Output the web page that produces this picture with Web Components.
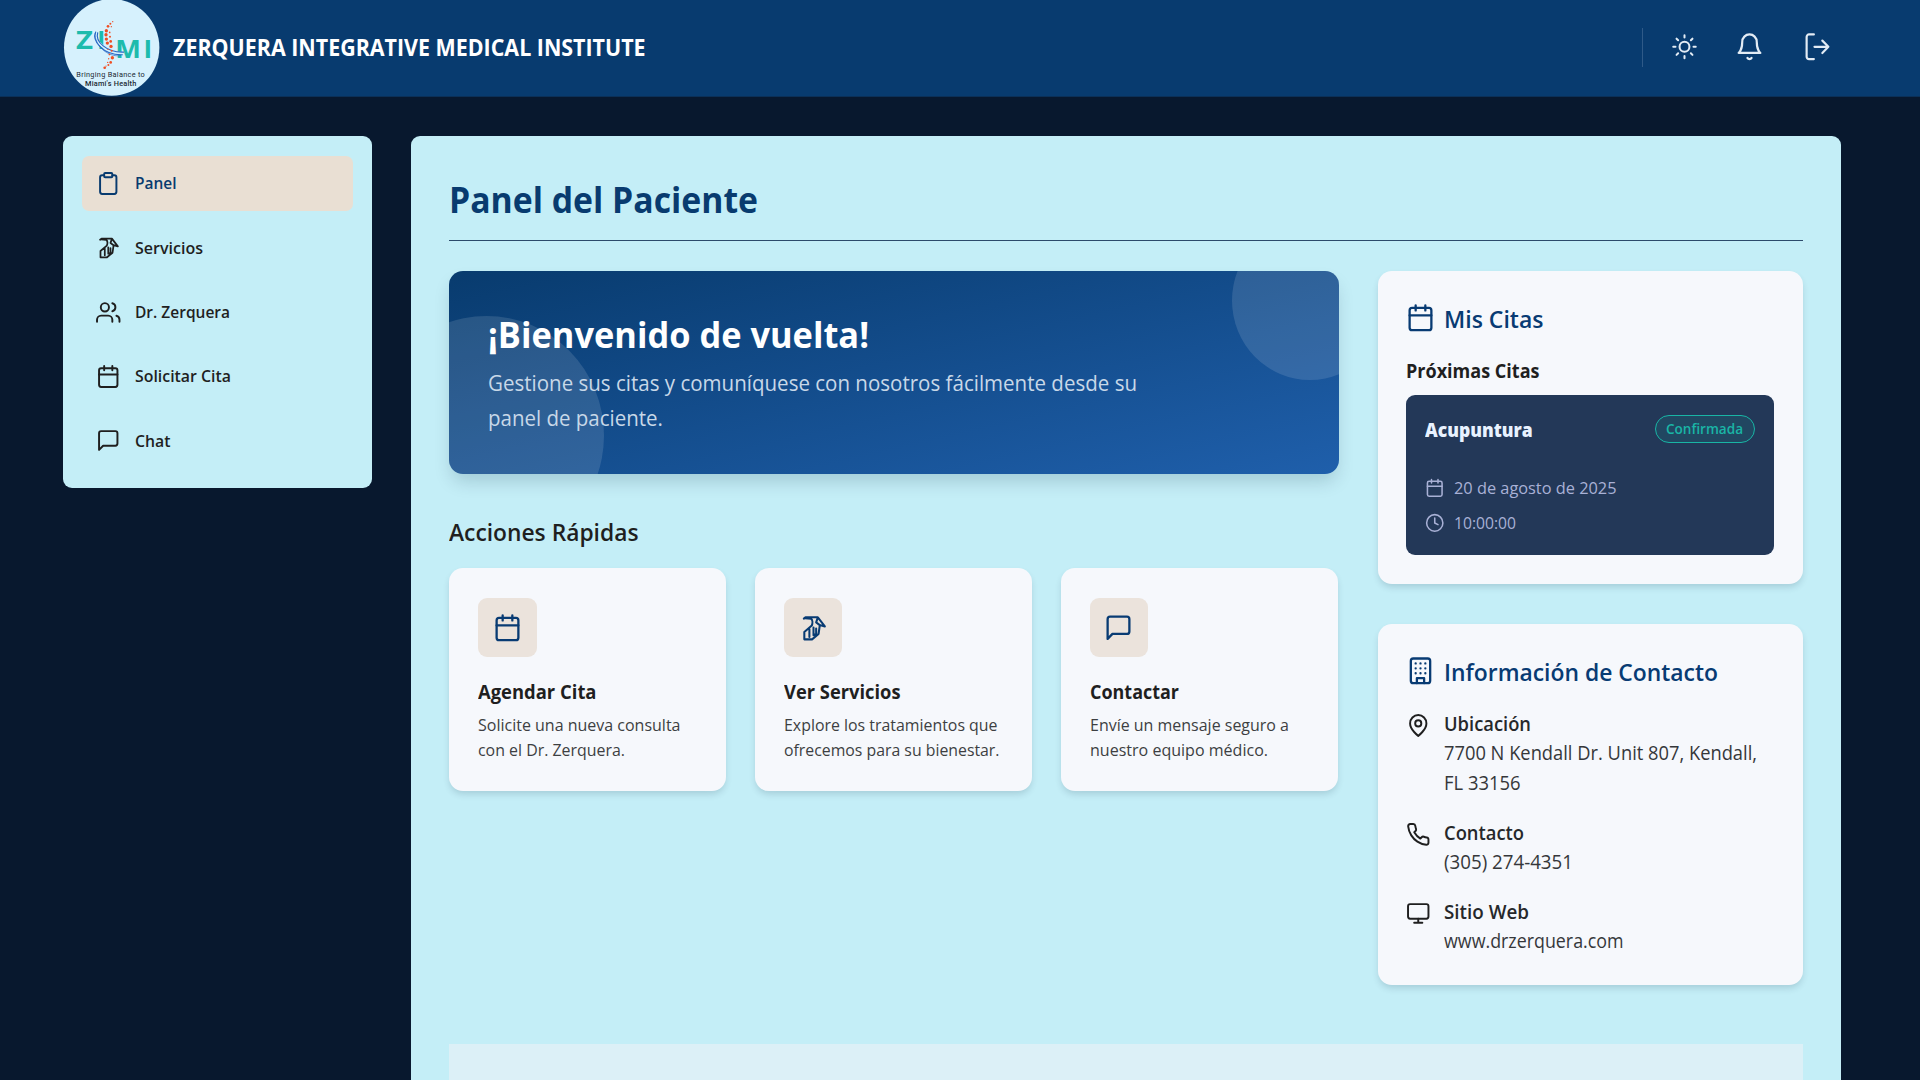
<!DOCTYPE html>
<html lang="es">
<head>
<meta charset="utf-8">
<title>Zerquera Integrative Medical Institute</title>
<style>
html,body{margin:0;height:100%;overflow:hidden;background:#08182e}
body{font-family:"Open Sans","Noto Sans",sans-serif;color:#1f1f1f}
</style>
</head>
<body>
<zimi-app></zimi-app>
<script>
const ICONS = {
  sun:'<circle cx="12" cy="12" r="4.4"/><path d="M12 2v2M12 20v2M4.93 4.93l1.41 1.41M17.66 17.66l1.41 1.41M2 12h2M20 12h2M6.34 17.66l-1.41 1.41M19.07 4.93l-1.41 1.41"/>',
  bell:'<path d="M18 8A6 6 0 0 0 6 8c0 7-3 9-3 9h18s-3-2-3-9M13.73 21a2 2 0 0 1-3.46 0"/>',
  logout:'<path d="M9 22H5a2 2 0 0 1-2-2V4a2 2 0 0 1 2-2h4M16 17l5-5-5-5M21 12H9.5"/>',
  clipboard:'<path d="M16 4h2a2 2 0 0 1 2 2v14a2 2 0 0 1-2 2H6a2 2 0 0 1-2-2V6a2 2 0 0 1 2-2h2"/><rect x="8" y="2" width="8" height="4" rx="1"/>',
  care:'<path stroke-width="1.7" d="M4 4.6L5.4 3.5H15.6L21.4 10.9L17.2 9.8M5 4.2l5 .4c1.2 1 1.4 3.6.6 5.6L4.4 15.4V21.4h6.4l5.4-4.4 1-7M8.6 13v6.4M12 11.8v6.2l2.2-1V12.6M15.4 4.2l-1.2 3.4 3 2.2"/>',
  users:'<path d="M16 21v-2a4 4 0 0 0-4-4H5a4 4 0 0 0-4 4v2"/><circle cx="8.7" cy="7" r="4"/><path d="M23 21v-2a4 4 0 0 0-3-3.87M16 3.13a4 4 0 0 1 0 7.75"/>',
  calendar:'<rect x="3" y="4" width="18" height="18" rx="2"/><path d="M16 2v4M8 2v4M3 10h18"/>',
  message:'<path d="M21 15a2 2 0 0 1-2 2H7l-4 4V5a2 2 0 0 1 2-2h14a2 2 0 0 1 2 2z"/>',
  clock:'<circle cx="12" cy="12" r="10"/><path d="M12 6v6l4 2"/>',
  building:'<rect x="4" y="2" width="16" height="20" rx="2"/><path d="M9 22v-4h6v4M8 6h.01M12 6h.01M16 6h.01M8 10h.01M12 10h.01M16 10h.01M8 14h.01M12 14h.01M16 14h.01"/>',
  pin:'<path d="M20 10c0 6-8 12-8 12s-8-6-8-12a8 8 0 0 1 16 0Z"/><circle cx="12" cy="10" r="3"/>',
  phone:'<path d="M22 16.92v3a2 2 0 0 1-2.18 2 19.79 19.79 0 0 1-8.63-3.07 19.5 19.5 0 0 1-6-6 19.79 19.79 0 0 1-3.07-8.67A2 2 0 0 1 4.11 2h3a2 2 0 0 1 2 1.72c.127.96.361 1.903.7 2.81a2 2 0 0 1-.45 2.11L8.09 9.91a16 16 0 0 0 6 6l1.27-1.27a2 2 0 0 1 2.11-.45c.907.339 1.85.573 2.81.7A2 2 0 0 1 22 16.92z"/>',
  monitor:'<rect x="2" y="3" width="20" height="14" rx="2"/><path d="M8 21h8M12 17v4"/>'
};
class Base extends HTMLElement {
  connectedCallback(){
    if (this.shadowRoot) return;
    this.attachShadow({mode:'open'}).innerHTML = this.view();
    this.ready && this.ready();
  }
  a(n, d=''){ return this.getAttribute(n) ?? d; }
}
/* one line of text, condensed or widened to the given width */
customElements.define('fit-text', class extends Base {
  view(){ return `<style>:host{display:block;width:${this.a('w')}px;white-space:nowrap}
    span{display:inline-block;transform-origin:0 50%}</style><span>${this.a('text')}</span>`; }
  ready(){
    const s = this.shadowRoot.querySelector('span');
    const n = s.offsetWidth && s.getBoundingClientRect().width;
    if (n) s.style.transform = `scaleX(${+this.a('w') / n})`;
  }
});
customElements.define('ui-icon', class extends Base {
  view(){ const s = +this.a('size','24.5');
    return `<style>:host{display:block;flex:none;width:${s}px;height:${s*1.02}px}svg{display:block;width:100%;height:100%;overflow:visible}</style>
    <svg viewBox="0 0 24 24" preserveAspectRatio="none" fill="none" stroke="currentColor" stroke-width="${this.a('stroke','1.9')}" stroke-linecap="round" stroke-linejoin="round">${ICONS[this.a('name')]}</svg>`; }
});
customElements.define('zimi-logo', class extends Base {
  view(){
    const dots = [[157,65,2],[150,71,3],[143,79,4],[153,80,2],[138,92,5],[148,97,2.5],[137,104,5],[149,110,3],[138,117,5],[151,124,4],[141,129,5],[152,139,5],[143,148,2],[154,152,3],[147,163,2.5],[156,173,5],[145,176,2],[151,187,4],[142,187,2],[144,195,3],[137,198,2],[133,203,4]]
      .map(([x,y,r]) => `<circle cx="${x}" cy="${y}" r="${r}"/>`).join('');
    return `<style>:host{display:block;flex:none;width:95.4px;height:96.8px;margin-top:-1px}svg{display:block;width:100%;height:100%;overflow:visible}</style>
    <svg viewBox="11 -3 286 290" preserveAspectRatio="none">
      <ellipse cx="154" cy="142" rx="143" ry="145" fill="#d6f1fd"/>
      <g fill="#1dbbac" font-family="Open Sans" font-weight="700">
        <text x="47" y="147" font-size="77" textLength="51" lengthAdjust="spacingAndGlyphs">Z</text>
        <text x="111" y="147" font-size="77" textLength="24" lengthAdjust="spacingAndGlyphs">I</text>
        <text x="165" y="174" font-size="77" textLength="77" lengthAdjust="spacingAndGlyphs">M</text>
        <text x="249" y="174" font-size="77" textLength="26" lengthAdjust="spacingAndGlyphs">I</text>
      </g>
      <path fill="none" stroke="#d6f1fd" stroke-width="8" d="M108 98C102 122 134 160 188 160"/>
      <g fill="none" stroke="#2867c4" stroke-width="3.4" stroke-linecap="round">
        <path d="M106 96C94 122 128 166 186 164"/><path d="M112 98C104 124 138 158 190 156"/><path d="M104 100C102 136 142 172 180 167" stroke-width="2"/>
      </g>
      <g fill="#f04e23">${dots}</g>
      <g fill="#222a33" font-family="Roboto" font-size="22">
        <text x="48" y="232" textLength="205" lengthAdjust="spacing">Bringing Balance to</text>
        <text x="74" y="257" font-weight="500" textLength="154" lengthAdjust="spacing">Miami's Health</text>
      </g>
    </svg>`; }
});
customElements.define('app-header', class extends Base {
  view(){ return `<style>
    :host{display:flex;align-items:center;box-sizing:border-box;height:97px;padding:0 88.2px 0 63.5px;background:#083b6f;border-bottom:1px solid #0b3058;color:#fff}
    .t{margin-left:14.1px;font-size:22.6px;font-weight:700;line-height:32px}
    nav{margin-left:auto;display:flex;align-items:center;color:#e3ecf5;margin-top:-2px}
    i{width:1px;height:39px;background:#2f5a88;margin-right:28px}
    .b{margin-left:37.6px}.c{margin-left:38.5px}
    </style><zimi-logo></zimi-logo><fit-text class="t" w="472.6" text="ZERQUERA INTEGRATIVE MEDICAL INSTITUTE"></fit-text>
    <nav><i></i><ui-icon name="sun" size="27" stroke="1.8"></ui-icon><ui-icon class="b" name="bell" size="29" stroke="1.8"></ui-icon><ui-icon class="c" name="logout" size="29" stroke="1.8"></ui-icon></nav>`; }
});
customElements.define('nav-item', class extends Base {
  view(){ return `<style>
    :host{display:flex;align-items:center;height:54.4px;padding-left:14px;border-radius:7px;gap:14px;font-size:17px;font-weight:600;line-height:26px}
    :host([active]){background:#e9dfd3;color:#083b6f}
    </style><ui-icon name="${this.a('icon')}"></ui-icon><fit-text w="${this.a('w')}" text="${this.a('label')}"></fit-text>`; }
});
customElements.define('side-nav', class extends Base {
  view(){ return `<style>
    :host{display:flex;flex-direction:column;gap:9.9px;flex:none;box-sizing:border-box;width:309.4px;height:352px;padding:20px 19.4px;background:#c4eef7;border-radius:9px}
    </style><slot></slot>`; }
});
customElements.define('welcome-banner', class extends Base {
  view(){ return `<style>
    :host{display:block;position:relative;overflow:hidden;box-sizing:border-box;height:203px;padding:40px 38.2px 0;border-radius:14px;background:linear-gradient(to bottom right,#083b6e,#1f5fab);color:#fff}
    .o{position:absolute;width:235px;height:239px;left:-80px;bottom:-81px;border-radius:50%;background:rgba(255,255,255,.12)}
    .p{width:156px;height:159px;left:auto;bottom:auto;right:-49px;top:-50px}
    .c{position:relative}
    .h{font-size:35.6px;font-weight:700;line-height:46px;margin-bottom:8px}
    .d{font-size:22px;line-height:34.8px;color:#c8d8e8}
    </style><div class="o"></div><div class="o p"></div>
    <div class="c"><fit-text class="h" w="381" text="¡Bienvenido de vuelta!"></fit-text>
    <fit-text class="d" w="649" text="Gestione sus citas y comuníquese con nosotros fácilmente desde su"></fit-text>
    <fit-text class="d" w="175" text="panel de paciente."></fit-text></div>`; }
});
customElements.define('action-card', class extends Base {
  view(){ return `<style>
    :host{display:block;box-sizing:border-box;flex:1;height:222.5px;padding:29.5px 0 0 29px;border-radius:14px;background:#f6f8fc;box-shadow:0 4px 7px -1px rgba(0,40,60,.16)}
    .i{display:flex;align-items:center;justify-content:center;width:58.3px;height:59.7px;border-radius:9px;background:#ebe3dc;color:#083b73}
    .t{font-size:19.3px;font-weight:700;line-height:30px;margin:20px 0 4.6px}
    .d{font-size:17px;line-height:25px;color:#3d3f42}
    </style><div class="i"><ui-icon name="${this.a('icon')}" size="29"></ui-icon></div>
    <fit-text class="t" w="${this.a('w')}" text="${this.a('label')}"></fit-text>
    <fit-text class="d" w="${this.a('w1')}" text="${this.a('l1')}"></fit-text>
    <fit-text class="d" w="${this.a('w2')}" text="${this.a('l2')}"></fit-text>`; }
});
customElements.define('info-card', class extends Base {
  view(){ return `<style>
    :host{display:block;box-sizing:border-box;padding:30px 29px 29px 28.6px;border-radius:14px;background:#f6f8fc;box-shadow:0 4px 7px -1px rgba(0,40,60,.16)}
    .h{display:flex;align-items:center;gap:9px;color:#083b73;font-size:24.2px;font-weight:600;line-height:36px;height:36px}
    ui-icon{margin-top:-1.6px}
    </style><div class="h"><ui-icon name="${this.a('icon')}" size="29" stroke="1.9"></ui-icon><fit-text w="${this.a('w')}" text="${this.a('label')}"></fit-text></div><slot></slot>`; }
});
customElements.define('appointment-item', class extends Base {
  view(){ return `<style>
    :host{display:block;box-sizing:border-box;height:160px;padding:20px 18.8px;border-radius:9px;background:#233858;color:#a9b1d6}
    .r{display:flex;justify-content:space-between;align-items:flex-start;margin-bottom:30.4px;height:30px}
    .n{font-size:19.3px;font-weight:800;line-height:30px;color:#e8f2ff}
    .b{box-sizing:border-box;height:27.5px;width:100px;padding-left:10px;border:1px solid #19b5a5;border-radius:14px;background:rgba(25,181,165,.13);color:#1ab5a6;font-size:14.4px;font-weight:600;line-height:26.4px}
    .m{display:flex;align-items:center;gap:9px;height:25px;line-height:25px;font-size:17px;margin-bottom:9.5px}
    </style><div class="r"><fit-text class="n" w="107.6" text="Acupuntura"></fit-text><div class="b"><fit-text w="77" text="Confirmada"></fit-text></div></div>
    <div class="m"><ui-icon name="calendar" size="19.5" stroke="1.9"></ui-icon><fit-text w="162.5" text="20 de agosto de 2025"></fit-text></div>
    <div class="m"><ui-icon name="clock" size="19.5" stroke="1.9"></ui-icon><fit-text w="62" text="10:00:00"></fit-text></div>`; }
});
customElements.define('contact-row', class extends Base {
  view(){ return `<style>
    :host{display:flex;gap:13.6px;font-size:19.3px;line-height:29.8px;color:#35373a}
    ui-icon{margin-top:4.4px;color:#1f1f1f}
    .t{font-weight:600;color:#26282b}
    </style><ui-icon name="${this.a('icon')}"></ui-icon><div><fit-text class="t" w="${this.a('w')}" text="${this.a('label')}"></fit-text><slot></slot></div>`; }
});
customElements.define('zimi-app', class extends Base {
  view(){ return `<style>
    :host{display:block;height:1080px;overflow:hidden;background:#08182e}
    .page{display:flex;gap:38.4px;padding:39.3px 78.6px 0 62.8px;align-items:flex-start}
    main{flex:1;box-sizing:border-box;height:1000px;background:#c4eef7;border-radius:9px;padding:40.4px 38.7px 0 38.8px}
    .h{font-size:36px;font-weight:700;line-height:46px;color:#083b6f}
    .head{padding-bottom:17.6px;border-bottom:1px solid #2c4a6b;margin-bottom:29.8px}
    .grid{display:flex;gap:39px}
    .l{width:889.4px}.r{flex:1;display:flex;flex-direction:column;gap:40px}
    .shade{border-radius:14px;box-shadow:0 10px 18px -3px rgba(0,40,60,.18)}
    .q{font-size:24.2px;font-weight:600;line-height:36px;margin:39.9px 0 18.3px}
    .cards{display:flex;gap:28.8px;padding-right:1px}
    .s{font-size:19.3px;font-weight:700;line-height:30px;margin:18.5px 0 9.5px}
    .first{margin-top:18.6px}.row{margin-top:19.5px}
    .foot{margin-top:59.2px;height:100px;background:#dcf0f7}
    </style>
    <app-header></app-header>
    <div class="page">
      <side-nav>
        <nav-item active icon="clipboard" label="Panel" w="41.5"></nav-item>
        <nav-item icon="care" label="Servicios" w="68"></nav-item>
        <nav-item icon="users" label="Dr. Zerquera" w="95"></nav-item>
        <nav-item icon="calendar" label="Solicitar Cita" w="96"></nav-item>
        <nav-item icon="message" label="Chat" w="35.5"></nav-item>
      </side-nav>
      <main>
        <div class="head"><fit-text class="h" w="309" text="Panel del Paciente"></fit-text></div>
        <div class="grid">
          <div class="l">
            <welcome-banner class="shade"></welcome-banner>
            <fit-text class="q" w="189.5" text="Acciones Rápidas"></fit-text>
            <div class="cards">
              <action-card icon="calendar" label="Agendar Cita" w="118.5" l1="Solicite una nueva consulta" w1="202.5" l2="con el Dr. Zerquera." w2="147"></action-card>
              <action-card icon="care" label="Ver Servicios" w="116.5" l1="Explore los tratamientos que" w1="213.5" l2="ofrecemos para su bienestar." w2="215.5"></action-card>
              <action-card icon="message" label="Contactar" w="89" l1="Envíe un mensaje seguro a" w1="199" l2="nuestro equipo médico." w2="178"></action-card>
            </div>
          </div>
          <div class="r">
            <info-card icon="calendar" label="Mis Citas" w="99.5">
              <fit-text class="s" w="133.5" text="Próximas Citas"></fit-text>
              <appointment-item></appointment-item>
            </info-card>
            <info-card icon="building" label="Información de Contacto" w="274">
              <contact-row class="first" icon="pin" label="Ubicación" w="87"><fit-text w="313" text="7700 N Kendall Dr. Unit 807, Kendall,"></fit-text><fit-text w="76.5" text="FL 33156"></fit-text></contact-row>
              <contact-row class="row" icon="phone" label="Contacto" w="80"><fit-text w="129" text="(305) 274-4351"></fit-text></contact-row>
              <contact-row class="row" icon="monitor" label="Sitio Web" w="85"><fit-text w="179.5" text="www.drzerquera.com"></fit-text></contact-row>
            </info-card>
          </div>
        </div>
        <div class="foot"></div>
      </main>
    </div>`; }
});
</script>
</body>
</html>
